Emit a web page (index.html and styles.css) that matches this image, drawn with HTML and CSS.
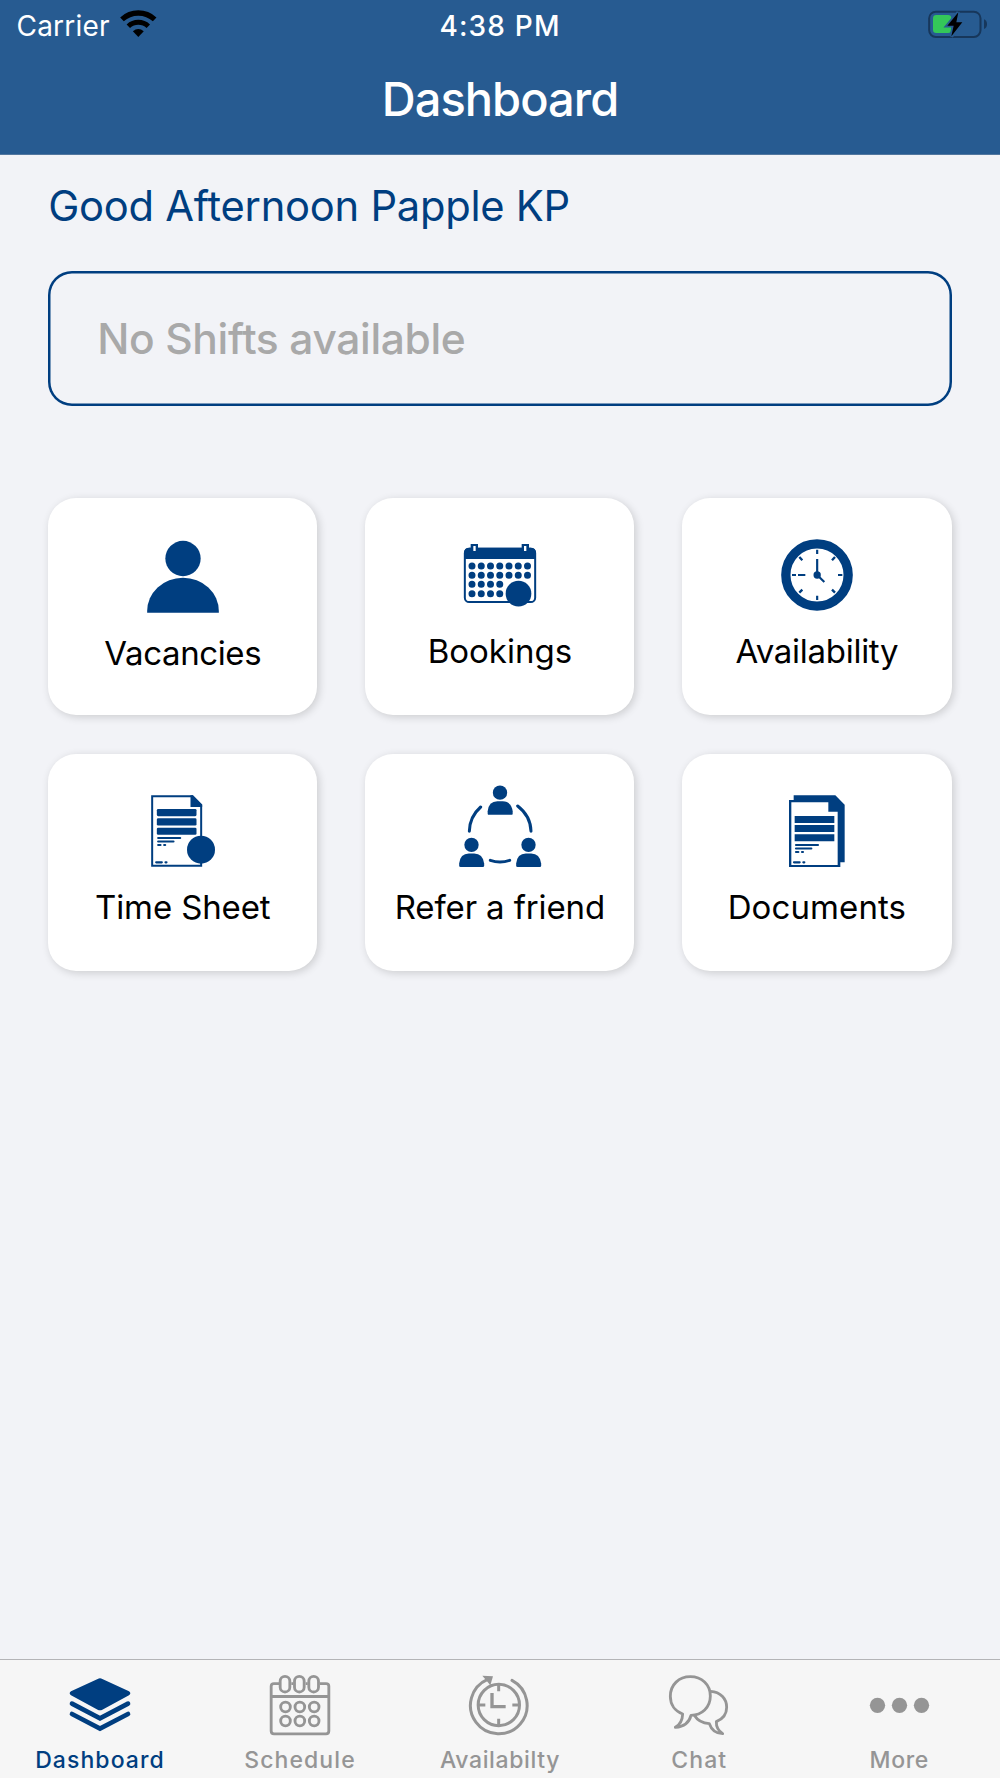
FILE: index.html
```html
<!DOCTYPE html>
<html lang="en">
<head>
<meta charset="utf-8">
<title>Dashboard</title>
<link rel="stylesheet" href="styles.css">
</head>
<body>
<div class="screen">
  <header class="header">
    <div class="status">
      <div class="status-left">
        <span class="carrier">Carrier</span>
        <svg class="wifi" viewBox="360 30 112 82"><g fill="none" stroke="#000"><path stroke-width="16" d="M365.9 58.3A72 72 0 0 1 464.1 58.3"/><path stroke-width="15" d="M385 78.8A44 44 0 0 1 445 78.8"/></g><path d="M415 111L398.6 94Q415 80 431.4 94Z"/></svg>
      </div>
      <span class="time">4:38 PM</span>
      <svg class="battery" viewBox="1284 30 180 86"><rect x="1287.500" y="35" width="154" height="76" rx="20" fill="none" stroke="#17375b" stroke-width="6"/><path fill="#17375b" d="M1452 58Q1461 62 1461 72.500T1452 87Z"/><rect x="1299" y="45" width="55" height="54" rx="10" fill="#34c759"/><path fill="#275b91" stroke="#275b91" stroke-width="11" d="M1375 37L1342 77H1361L1354 109L1387 67H1369Z"/><path d="M1375 37L1342 77H1361L1354 109L1387 67H1369Z"/></svg>
    </div>
    <h1 class="title">Dashboard</h1>
  </header>
  <main class="main">
    <p class="greeting">Good Afternoon Papple KP</p>
    <div class="shifts">No Shifts available</div>
    <div class="tiles">
      <a class="tile tile-low">
        <span class="slot"><svg class="icon" viewBox="350.500 184 216 216"><circle cx="458.500" cy="236.500" r="53"/><path d="M351 399V394A107.500 100 0 0 1 566 394V399Z"/></svg></span>
        <span class="label label-tight">Vacancies</span>
      </a>
      <a class="tile">
        <span class="slot"><svg class="icon" viewBox="343 177 216 216">
          <rect x="345.500" y="206" width="211" height="160" rx="13" fill="none" stroke="#003e80" stroke-width="6"/>
          <path d="M343 237V219Q343 203 359 203H543Q559 203 559 219V237Z"/>
          <path d="M363 192H385V214H363ZM516 192H538V214H516Z"/>
          <path fill="#fff" d="M371 198H378V213H371ZM523 198H530V213H523Z"/>
          <path fill="none" stroke="#003e80" stroke-width="21" stroke-linecap="round" stroke-dasharray="0 27.750" d="M367 258H535M367 286H535M367 313H452M367 341H452"/>
          <circle cx="506.500" cy="341" r="38.500"/></svg></span>
        <span class="label">Bookings</span>
      </a>
      <a class="tile">
        <span class="slot"><svg class="icon" viewBox="333 177 216 216">
          <circle cx="441" cy="285" r="93.500" fill="none" stroke="#003e80" stroke-width="28"/>
          <circle cx="441.500" cy="285" r="11"/>
          <g fill="none" stroke="#003e80" stroke-width="6.500"><path d="M441.500 285V237M441.500 285L463 306M441.500 209V222M441.500 347V360M504 285H517M366 285H378M384 285H406"/><path stroke-width="7" d="M388 231L397 241M495 231L486 241M388 338L397 329M495 338L486 329"/></g></svg></span>
        <span class="label label-snug">Availability</span>
      </a>
      <a class="tile">
        <span class="slot"><svg class="icon" viewBox="350.500 165 216 216">
          <path fill="none" stroke="#003e80" stroke-width="6" d="M366 168.500H487L513 195V377.500H366Z"/>
          <path d="M481 166H488L516 194V201H481Z"/>
          <rect x="380" y="207" width="119" height="21.500" rx="4"/><rect x="380" y="235" width="119" height="21.500" rx="4"/><rect x="380" y="263" width="119" height="21.500" rx="4"/>
          <path fill="none" stroke="#003e80" stroke-width="6.500" stroke-linecap="round" d="M384 294H450M384 304.500H430M384 315H391M402 315H405M378 367H395M406 367H409"/>
          <circle cx="512.500" cy="329" r="42"/></svg></span>
        <span class="label label-mid">Time Sheet</span>
      </a>
      <a class="tile">
        <span class="slot"><svg class="icon icon-wide" viewBox="327 135 246 246">
          <g id="person"><circle cx="450" cy="158" r="21.500"/><path d="M413 221V214Q416 184 442 184H458Q484 184 488 214V221Q488 224.500 484 224.500H417Q413 224.500 413 221Z"/></g>
          <use href="#person" x="-85.500" y="156.500"/><use href="#person" x="85.500" y="156.500"/>
          <path fill="none" stroke="#003e80" stroke-width="9" stroke-linecap="round" d="M392 201Q359 230 358 274M503 198Q542 228 543 274M421 361Q450 371 479 361"/></svg></span>
        <span class="label label-mid">Refer a friend</span>
      </a>
      <a class="tile">
        <span class="slot"><svg class="icon" viewBox="334 165 216 216">
          <path d="M372 166H497L525 194V367H512V381H358V180H372Z"/>
          <path fill="#fff" d="M365 187H476V215H504V375H365Z"/>
          <path d="M375 228H494V249H375ZM375 255H494V276H375ZM375 283H494V304H375Z"/>
          <path fill="none" stroke="#003e80" stroke-width="6.500" stroke-linecap="round" d="M379 315H445M379 325.500H425M379 336H386M397 336H400M373 367H390M401 367H404"/></svg></span>
        <span class="label label-open">Documents</span>
      </a>
    </div>
  </main>
  <nav class="tabs">
    <a class="tab active"><svg class="tab-icon" viewBox="208 105 186 180"><path d="M294 117Q301 113 308 117L388 154Q396 160 388 166L308 209Q301 213 294 209L214 166Q206 160 214 154Z"/><path fill="none" stroke="currentColor" stroke-width="14" stroke-linecap="round" d="M217 191L301 235L385 191M217 222L301 266L385 222"/></svg><span>Dashboard</span></a>
    <a class="tab"><svg class="tab-icon" viewBox="807 105 186 180"><g fill="none" stroke="currentColor" stroke-width="8.500"><path d="M837 131H822Q813.500 131 813.500 139V273Q813.500 281.500 822 281.500H978Q986.500 281.500 986.500 273V139Q986.500 131 978 131H960M874 131H880M917 131H923M813 169.500H987"/><rect x="840.500" y="109" width="29" height="47" rx="14.500"/><rect x="883.500" y="109" width="29" height="47" rx="14.500"/><rect x="926.500" y="109" width="29" height="47" rx="14.500"/><circle cx="856.500" cy="201" r="14.500"/><circle cx="899.500" cy="201" r="14.500"/><circle cx="942.500" cy="201" r="14.500"/><circle cx="856.500" cy="243" r="14.500"/><circle cx="899.500" cy="243" r="14.500"/><circle cx="942.500" cy="243" r="14.500"/></g></svg><span>Schedule</span></a>
    <a class="tab tab-snug"><svg class="tab-icon" viewBox="417 105 186 180"><g fill="none" stroke="currentColor" stroke-width="9"><circle cx="506.500" cy="195" r="62"/><path stroke-linecap="round" d="M546 121A85 85 0 1 1 473 118"/><path stroke-width="9" d="M506 133V154M506 236V257M444 195H466M547 195H569"/><path stroke-width="10" d="M486 159V200H527"/></g><path d="M457 107L489 109L481 136Z"/></svg><span>Availabilty</span></a>
    <a class="tab tab-end"><svg class="tab-icon" viewBox="27 105 186 180"><g fill="none" stroke="currentColor" stroke-width="8.500" stroke-linejoin="round"><path d="M46 262Q67 250 68 222C45 214 31 194 31 169C31 134 57 110 91 110S151 134 151 168C151 203 125 225 93 226Q85 259 46 262Z"/><path d="M152 154C181 156 200 176 200 202C200 222 189 237 169 245Q168 268 188 281Q158 281 148 251C128 250 112 241 103 226"/></g></svg><span>Chat</span></a>
    <a class="tab tab-snug tab-end"><svg class="tab-icon" viewBox="627 105 186 180"><circle cx="652.500" cy="196" r="23"/><circle cx="718.500" cy="196" r="23"/><circle cx="784.500" cy="196" r="23"/></svg><span>More</span></a>
  </nav>
</div>
</body>
</html>
```
FILE: styles.css
```css
* { box-sizing: border-box; }
body { margin: 0; background: #f2f3f7; font-family: Inter, "Liberation Sans", sans-serif; }
svg { display: block; flex: none; overflow: visible; }
.screen { width: 1000px; height: 1778px; display: flex; flex-direction: column; }

.header { height: 155px; background: #275b91; border-bottom: 1px solid #52779f; color: #fff; }
.status { display: grid; grid-template-columns: 1fr auto 1fr; height: 51px; padding: 0 12px; line-height: 52px; font-size: 28px; }
.status-left { display: flex; gap: 10.5px; padding-left: 4.5px; }
.carrier { letter-spacing: .21px; }
.wifi { width: 37.3px; height: 27.3px; margin-top: 10px; }
.battery { width: 60px; height: 28.7px; margin-top: 10px; justify-self: end; }
.time { font-weight: 500; letter-spacing: 1.17px; }
.title { margin: 0; text-align: center; font-size: 47px; font-weight: 500; line-height: 96px; letter-spacing: -.96px; }

.main { flex: 1; padding: 0 48.5px 0 48.2px; }
.greeting { margin: 0 0 13.5px; font-size: 41.7px; line-height: 102px; letter-spacing: -.25px; color: #003e80; }
.shifts { height: 135px; padding-left: 49px; box-shadow: inset 0 0 0 2.5px #003e80; border-radius: 24px; font-size: 42.5px; font-weight: 500; line-height: 136px; letter-spacing: -.36px; color: #a9a9a9; }
.tiles { display: grid; grid-template-columns: repeat(3, 269.2px); justify-content: space-between; grid-auto-rows: 217.5px; row-gap: 38.5px; margin-top: 92px; }
.tile { display: flex; flex-direction: column; align-items: center; background: #fff; border-radius: 28px; box-shadow: 2px 2px 8px rgba(0, 0, 0, .16); }
.slot { display: flex; align-items: flex-end; height: 113.5px; margin-bottom: 20px; }
.tile-low .slot { height: 115.5px; }
.icon { width: 72px; height: 72px; fill: #003e80; }
.icon-wide { width: 82px; height: 82px; }
.label { font-size: 33px; line-height: 40px; white-space: nowrap; color: #000; }
.label-tight { letter-spacing: -.39px; }
.label-snug { letter-spacing: -.28px; }
.label-mid { letter-spacing: -.13px; }
.label-open { letter-spacing: .11px; }

.tabs { display: grid; grid-template-columns: repeat(5, 1fr); height: 119px; border-top: 1px solid #b4b4b7; background: #f6f6f6; }
.tab { display: flex; flex-direction: column; align-items: center; gap: 10px; padding-top: 15px; font-size: 23px; font-weight: 500; line-height: 30px; letter-spacing: 1.08px; color: #959595; }
.tab-snug { letter-spacing: .64px; }
.tab-end span { padding-right: 1.5px; }
.tab.active { color: #003e80; }
.tab-icon { width: 62px; height: 60px; fill: currentColor; }
```
